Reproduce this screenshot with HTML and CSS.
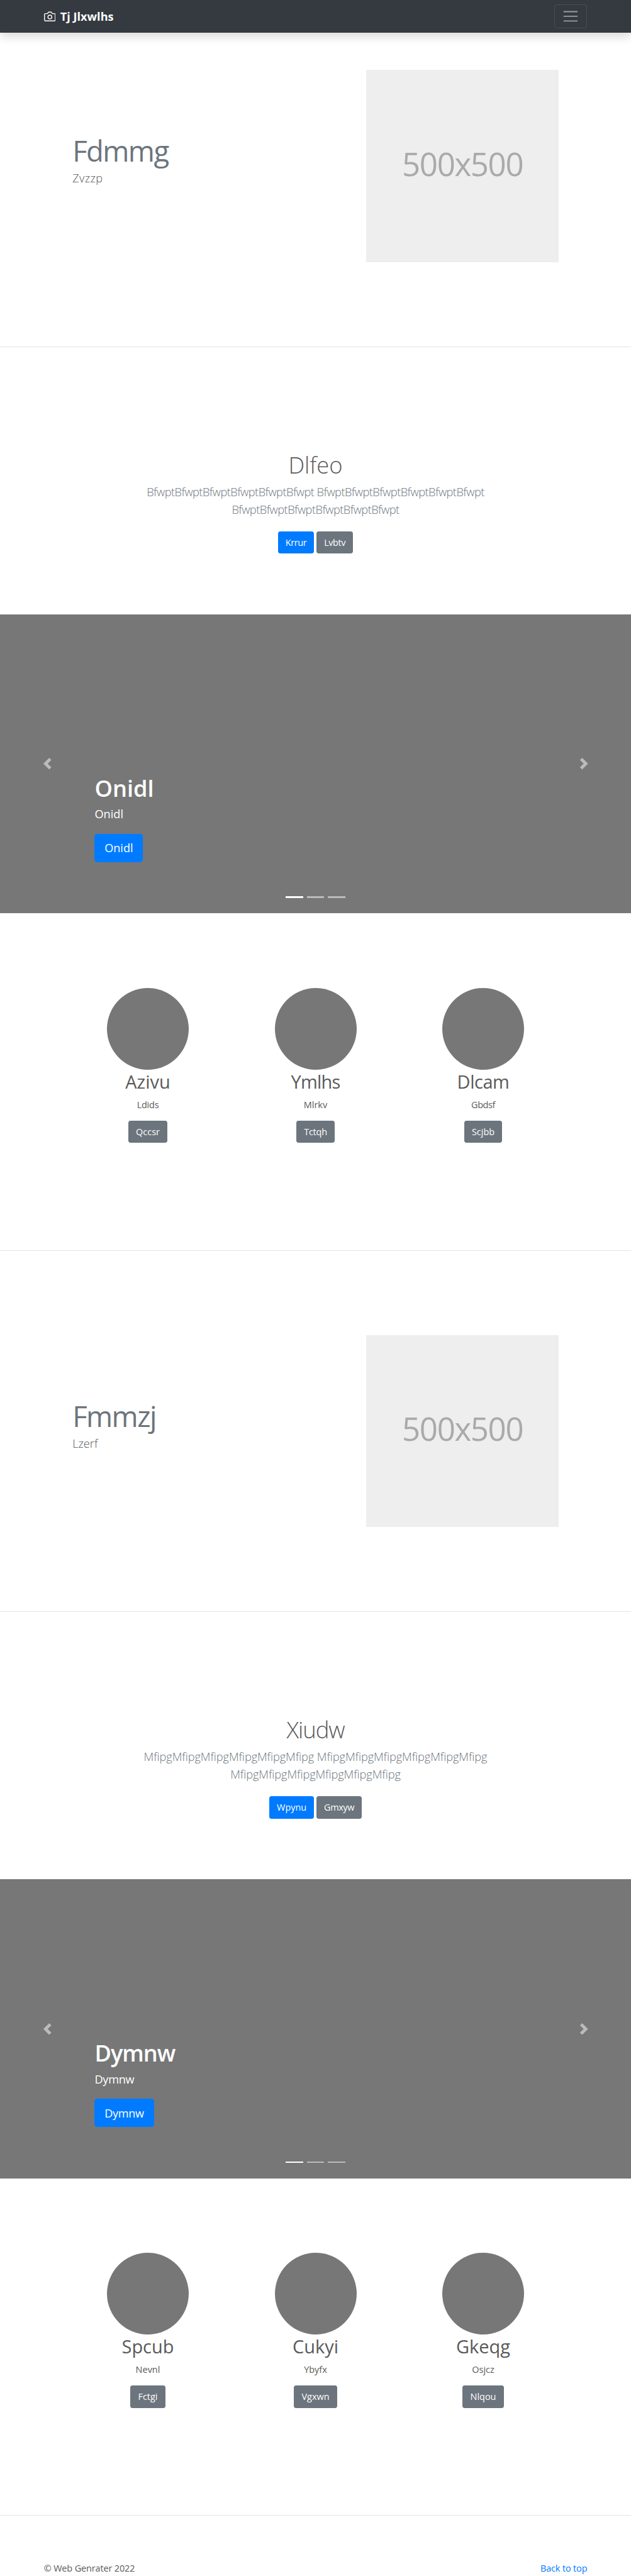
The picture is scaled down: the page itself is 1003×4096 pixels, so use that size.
FILE: index.html
```html
<!DOCTYPE html>
<html lang="en">
<head>
<meta charset="utf-8">
<title>Tj Jlxwlhs</title>
<link rel="stylesheet" href="styles.css">
</head>
<body>
<header class="navbar">
  <a class="brand" href="#">
    <svg viewBox="0 0 24 24" fill="none" stroke="currentColor" stroke-width="1.8" stroke-linecap="round" stroke-linejoin="round"><path d="M23 19a2 2 0 0 1-2 2H3a2 2 0 0 1-2-2V8a2 2 0 0 1 2-2h4l2-3h6l2 3h4a2 2 0 0 1 2 2z"/><circle cx="12" cy="13" r="4"/></svg>
    <span>Tj Jlxwlhs</span>
  </a>
  <button class="toggler" aria-label="Menu"><svg viewBox="0 0 30 30" stroke="rgba(255,255,255,.5)" stroke-width="2"><path d="M3 7h24M3 15h24M3 23h24"/></svg></button>
</header>
<main>
  <section class="featurette first">
    <div class="copy"><h2>Fdmmg</h2><p class="wide">Zvzzp</p></div>
    <div class="placeholder">500x500</div>
  </section>
  <hr>
  <section class="intro">
    <h1>Dlfeo</h1>
    <p class="tight">BfwptBfwptBfwptBfwptBfwptBfwpt BfwptBfwptBfwptBfwptBfwptBfwpt BfwptBfwptBfwptBfwptBfwptBfwpt</p>
    <div class="actions"><a class="btn primary tight" href="#">Krrur</a><a class="btn tight" href="#">Lvbtv</a></div>
  </section>
  <section class="carousel">
    <div class="caption"><h2>Onidl</h2><p>Onidl</p><a class="btn primary large" href="#">Onidl</a></div>
    <svg class="arrow prev" viewBox="0 0 8 8"><path d="M5.25 0l-4 4 4 4 1.5-1.5L4.25 4l2.5-2.5L5.25 0z"/></svg>
    <svg class="arrow next" viewBox="0 0 8 8"><path d="M2.75 0l-1.5 1.5L3.75 4l-2.5 2.5L2.75 8l4-4-4-4z"/></svg>
    <div class="indicators"><i class="active"></i><i></i><i></i></div>
  </section>
  <section class="columns">
    <div class="col"><div class="avatar"></div><h2>Azivu</h2><p class="snug">Ldids</p><a class="btn" href="#">Qccsr</a></div>
    <div class="col"><div class="avatar"></div><h2 class="tight">Ymlhs</h2><p>Mlrkv</p><a class="btn snug" href="#">Tctqh</a></div>
    <div class="col"><div class="avatar"></div><h2 class="snug">Dlcam</h2><p class="tight">Gbdsf</p><a class="btn" href="#">Scjbb</a></div>
  </section>
  <hr>
  <section class="featurette">
    <div class="copy"><h2>Fmmzj</h2><p>Lzerf</p></div>
    <div class="placeholder">500x500</div>
  </section>
  <hr>
  <section class="intro">
    <h1 class="tight">Xiudw</h1>
    <p class="slight">MfipgMfipgMfipgMfipgMfipgMfipg MfipgMfipgMfipgMfipgMfipgMfipg MfipgMfipgMfipgMfipgMfipgMfipg</p>
    <div class="actions"><a class="btn primary" href="#">Wpynu</a><a class="btn tight" href="#">Gmxyw</a></div>
  </section>
  <section class="carousel">
    <div class="caption"><h2 class="tight">Dymnw</h2><p class="snug">Dymnw</p><a class="btn primary large snug" href="#">Dymnw</a></div>
    <svg class="arrow prev" viewBox="0 0 8 8"><path d="M5.25 0l-4 4 4 4 1.5-1.5L4.25 4l2.5-2.5L5.25 0z"/></svg>
    <svg class="arrow next" viewBox="0 0 8 8"><path d="M2.75 0l-1.5 1.5L3.75 4l-2.5 2.5L2.75 8l4-4-4-4z"/></svg>
    <div class="indicators"><i class="active"></i><i></i><i></i></div>
  </section>
  <section class="columns">
    <div class="col"><div class="avatar"></div><h2>Spcub</h2><p>Nevnl</p><a class="btn" href="#">Fctgi</a></div>
    <div class="col"><div class="avatar"></div><h2>Cukyi</h2><p>Ybyfx</p><a class="btn" href="#">Vgxwn</a></div>
    <div class="col"><div class="avatar"></div><h2>Gkeqg</h2><p>Osjcz</p><a class="btn" href="#">Nlqou</a></div>
  </section>
  <hr>
</main>
<footer class="footer"><span>© Web Genrater 2022</span><a href="#">Back to top</a></footer>
</body>
</html>
```
FILE: styles.css
```css
* { box-sizing: border-box; }

html { font-size: 9.286px; background: #fff; }

body {
  height: 4096px;
  overflow: hidden;
  margin: 0;
  font: 400 1.56rem/2.4rem "Open Sans", "Noto Sans", sans-serif;
  color: #5a5a5a;
}

h1, h2, p { margin: 0; font-weight: 400; }
a { color: #007bff; text-decoration: none; }
hr { margin: 0; height: 0.1rem; border: 0; background: #e5e5e5; }

/* letter fitting */
.wide { letter-spacing: 0.02em; }
.slight { letter-spacing: -0.005em; }
.snug { letter-spacing: -0.016em; }
.tight { letter-spacing: -0.028em; }

/* top bar */
.navbar {
  position: relative;
  display: flex;
  justify-content: space-between;
  align-items: center;
  height: 5.6rem;
  padding: 0 7.5rem;
  background: #343a40;
  box-shadow: 0 0.8rem 1.6rem rgba(0, 0, 0, 0.15);
}
.brand {
  display: flex;
  align-items: center;
  gap: 0.8rem;
  color: #fff;
  font-size: 1.96rem;
  font-weight: 700;
}
.brand svg { width: 2rem; height: 2rem; }
.brand span { padding-top: 0.1rem; }
.toggler {
  display: flex;
  align-items: center;
  justify-content: center;
  width: 5.6rem;
  height: 4rem;
  padding: 0;
  border: 1px solid rgba(255, 255, 255, 0.1);
  border-radius: 0.4rem;
  background: none;
}
.toggler svg { width: 3rem; height: 3rem; }

/* heading beside a square picture */
.featurette {
  display: flex;
  justify-content: space-between;
  height: 61.7rem;
  padding: 14.4rem 12.4rem 0;
}
.featurette.first { height: 53.7rem; padding-top: 6.4rem; }
.copy { padding-top: 11.3rem; }
.copy h2 {
  margin-bottom: 0.8rem;
  font-size: 4.9rem;
  line-height: 5rem;
  letter-spacing: -0.17rem;
  color: #6c757d;
}
.copy p { font-size: 1.96rem; line-height: 3rem; font-weight: 300; }
.placeholder {
  display: flex;
  align-items: center;
  justify-content: center;
  width: 32.9rem;
  height: 32.9rem;
  padding-bottom: 0.9rem;
  background: #eee;
  color: #aaa;
  font-size: 5.5rem;
  letter-spacing: -0.15rem;
}

/* centred introduction */
.intro { height: 45.8rem; padding: 17.8rem 24rem 0; text-align: center; }
.intro h1 { margin-bottom: 0.8rem; font-size: 3.92rem; line-height: 4.8rem; font-weight: 300; }
.intro p { font-size: 1.96rem; line-height: 3rem; font-weight: 300; color: #6c757d; }
.actions { display: flex; justify-content: center; gap: 0.4rem; margin-top: 2.2rem; }

.btn {
  display: inline-block;
  height: 3.8rem;
  padding: 0.76rem 1.3rem 0;
  border-radius: 0.4rem;
  background: #6c757d;
  color: #fff;
}
.btn.primary { background: #007bff; }
.btn.large { height: 4.8rem; padding: 1rem 1.7rem 0; border-radius: 0.5rem; font-size: 1.95rem; line-height: 3rem; }

/* carousel */
.carousel { position: relative; height: 51.2rem; padding: 27.35rem 16.2rem 0; background: #777; color: #fff; }
.caption h2 { margin-bottom: 0.65rem; font-size: 3.9rem; line-height: 4.8rem; font-weight: 600; }
.caption p { margin-bottom: 1.8rem; font-size: 1.96rem; line-height: 3rem; }
.arrow { position: absolute; top: 24.6rem; width: 2rem; height: 2rem; fill: #fff; opacity: 0.5; }
.prev { left: 7.1rem; }
.next { right: 7.1rem; }
.indicators {
  position: absolute;
  right: 0;
  bottom: 2.6rem;
  left: 0;
  display: flex;
  justify-content: center;
  gap: 0.6rem;
}
.indicators i { width: 3rem; height: 0.3rem; background: #fff; opacity: 0.5; }
.indicators .active { opacity: 1; }

/* three columns */
.columns {
  display: grid;
  grid-template-columns: repeat(3, 28.7rem);
  justify-content: center;
  height: 57.7rem;
  padding-top: 12.8rem;
  text-align: center;
}
.avatar { width: 14rem; height: 14rem; margin: 0 auto 0.1rem; border-radius: 50%; background: #777; }
.col h2 { margin-bottom: 0.8rem; font-size: 3.12rem; line-height: 3.9rem; }
.col p { margin-bottom: 1.5rem; }

.footer {
  display: flex;
  justify-content: space-between;
  padding: 7.85rem 7.5rem 0;
  letter-spacing: -0.01em;
}
```
